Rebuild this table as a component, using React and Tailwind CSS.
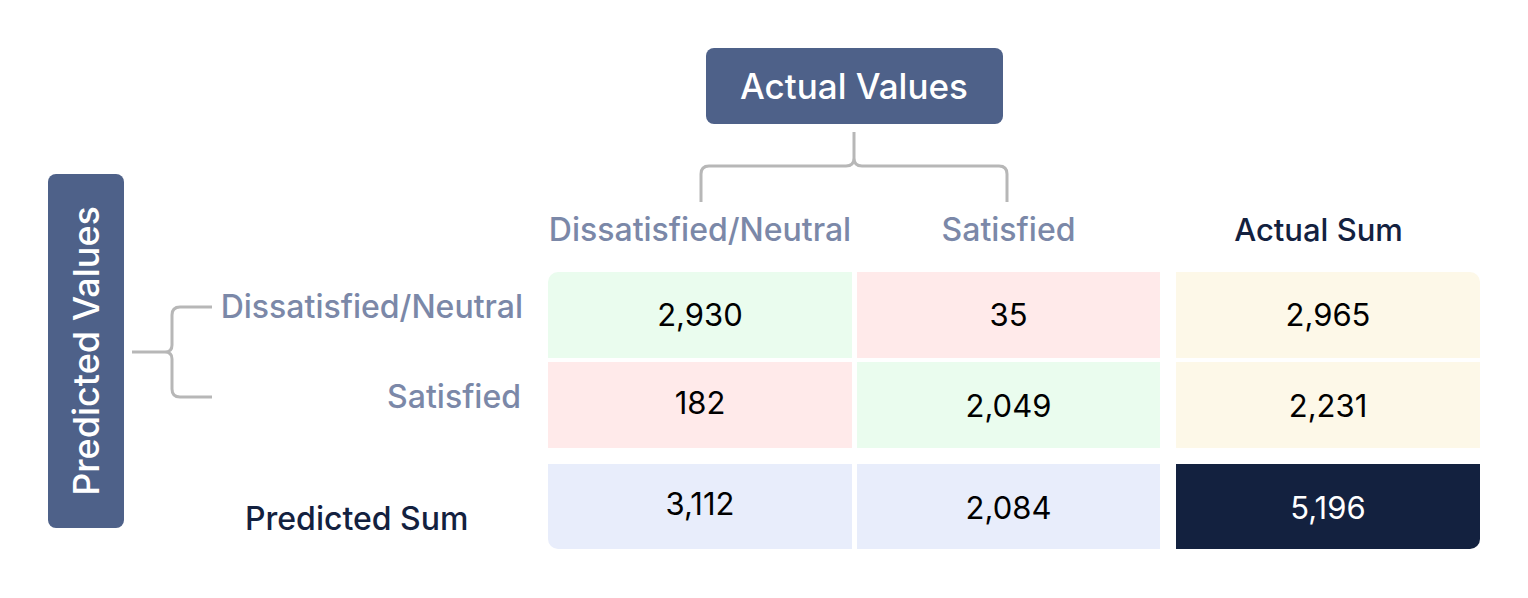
import React from "react";

const cells = [
  { value: "2,930", bg: "bg-[#eafcee]", extra: "rounded-tl-[10px]", col: "col-start-3", row: "row-start-4" },
  { value: "35", bg: "bg-[#ffeaea]", extra: "", col: "col-start-5", row: "row-start-4" },
  { value: "2,965", bg: "bg-[#fdf8e8]", extra: "rounded-tr-[10px]", col: "col-start-7", row: "row-start-4" },
  { value: "182", bg: "bg-[#ffeaea]", extra: "pb-[4px]", col: "col-start-3", row: "row-start-6" },
  { value: "2,049", bg: "bg-[#eafcee]", extra: "pt-[3px]", col: "col-start-5", row: "row-start-6" },
  { value: "2,231", bg: "bg-[#fdf8e8]", extra: "pt-[3px]", col: "col-start-7", row: "row-start-6" },
  { value: "3,112", bg: "bg-[#e8edfb]", extra: "rounded-bl-[10px] pb-[4px]", col: "col-start-3", row: "row-start-8" },
  { value: "2,084", bg: "bg-[#e8edfb]", extra: "pt-[3px]", col: "col-start-5", row: "row-start-8" },
  { value: "5,196", bg: "bg-[#13213f] text-white", extra: "rounded-br-[10px] pt-[3px]", col: "col-start-7", row: "row-start-8" },
];

const App = () => {
  return (
    <div className="w-[1528px] h-[598px] bg-white flex pl-[48px] pt-[48px] font-['Inter','Noto_Sans',sans-serif]">
      {/* vertical header */}
      <div className="w-[76px] h-[354px] mt-[126px] bg-[#4e6189] rounded-lg flex items-center justify-center">
        <span className="[writing-mode:vertical-rl] rotate-180 text-white text-[36px] font-medium leading-none whitespace-nowrap">
          Predicted Values
        </span>
      </div>

      <div className="ml-[8px] grid grid-cols-[80px_336px_304px_5px_303px_16px_304px] grid-rows-[76px_78px_70px_86px_4px_86px_16px_85px]">
        {/* top header */}
        <div className="col-start-3 col-span-3 row-start-1 justify-self-center w-[297px] h-[76px] bg-[#4e6189] rounded-lg flex items-center justify-center text-white text-[35px] font-medium">
          Actual Values
        </div>

        {/* top bracket */}
        <svg className="col-start-3 col-span-3 row-start-2" width="612" height="78" viewBox="0 0 612 78" fill="none">
          <path
            d="M306 8 V34 Q306 42 298 42 H161 Q153 42 153 50 V78 M306 34 Q306 42 314 42 H451 Q459 42 459 50 V78"
            stroke="#b7b7b7"
            strokeWidth="3"
          />
        </svg>

        {/* column labels */}
        <div className="col-start-3 row-start-3 pt-[8px] text-center text-[32px] font-medium leading-[40px] text-[#7b88a8] whitespace-nowrap">
          Dissatisfied/Neutral
        </div>
        <div className="col-start-5 row-start-3 pt-[8px] text-center text-[32px] font-medium leading-[40px] text-[#7b88a8]">
          Satisfied
        </div>
        <div className="col-start-7 row-start-3 pt-[8px] pr-[19px] text-center text-[31px] font-medium leading-[40px] text-[#13213f]">
          Actual Sum
        </div>

        {/* left bracket */}
        <svg className="col-start-1 row-start-4 row-span-3" width="80" height="176" viewBox="0 0 80 176" fill="none">
          <path
            d="M0 80 H33 Q40 80 40 73 V43 Q40 35 48 35 H80 M33 80 Q40 80 40 87 V117 Q40 125 48 125 H80"
            stroke="#b7b7b7"
            strokeWidth="3"
          />
        </svg>

        {/* row labels */}
        <div className="col-start-2 row-start-4 flex items-center justify-end pr-[25px] pb-[16px] text-[32px] font-medium text-[#7b88a8] whitespace-nowrap">
          Dissatisfied/Neutral
        </div>
        <div className="col-start-2 row-start-6 flex items-center justify-end pr-[27px] pb-[16px] text-[32px] font-medium text-[#7b88a8]">
          Satisfied
        </div>
        <div className="col-start-2 row-start-8 flex items-center pl-[33px] pt-[24px] text-[32px] font-medium text-[#13213f]">
          Predicted Sum
        </div>

        {/* matrix cells */}
        {cells.map((c) => (
          <div
            key={c.value}
            className={`${c.col} ${c.row} ${c.bg} ${c.extra} flex items-center justify-center text-[31px] text-black`}
          >
            {c.value}
          </div>
        ))}
      </div>
    </div>
  );
};

export default App;
